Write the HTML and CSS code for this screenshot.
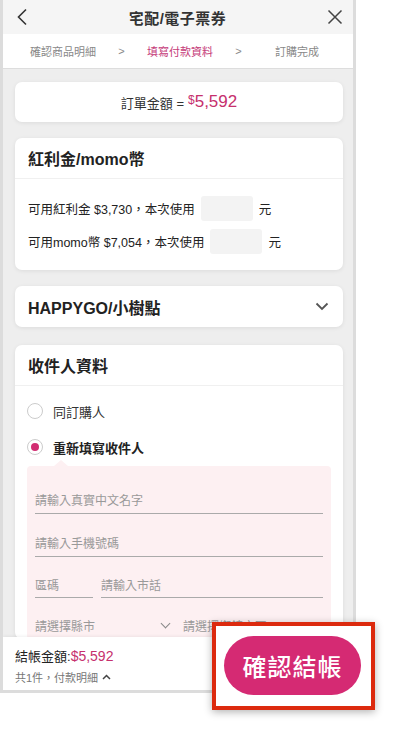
FILE: index.html
```html
<!DOCTYPE html>
<html>

<head>
    <meta charset="UTF-8">
    <title>宅配/電子票券</title>
    <link rel="stylesheet" href="styles.css">
</head>

<body>
    <div class="phone">
        <div class="header">
            <svg class="icon_back" width="12" height="18" viewBox="0 0 12 18"><path d="M10 1.5 L2.5 9 L10 16.5" fill="none" stroke="#333" stroke-width="1.6"/></svg>
            <div class="title">宅配/電子票券</div>
            <svg class="icon_close" width="16" height="16" viewBox="0 0 16 16"><path d="M1.5 1.5 L14.5 14.5 M14.5 1.5 L1.5 14.5" fill="none" stroke="#444" stroke-width="1.5"/></svg>
        </div>
        <div class="steps">
            <span class="step">確認商品明細</span>
            <span class="arrow">&gt;</span>
            <span class="step on">填寫付款資料</span>
            <span class="arrow">&gt;</span>
            <span class="step last">訂購完成</span>
        </div>

        <div class="content">
            <div class="card total">
                訂單金額 = <span class="price"><small>$</small>5,592</span>
            </div>

            <div class="card">
                <div class="card_head">紅利金/momo幣</div>
                <div class="card_body bonus">
                    <div class="row">可用紅利金 $3,730，本次使用 <span class="box"></span> 元</div>
                    <div class="row">可用momo幣 $7,054，本次使用 <span class="box"></span> 元</div>
                </div>
            </div>

            <div class="card fold">
                <div class="card_head">HAPPYGO/小樹點</div>
                <svg width="14" height="9" viewBox="0 0 14 9"><path d="M1.5 1.5 L7 7 L12.5 1.5" fill="none" stroke="#555" stroke-width="1.8"/></svg>
            </div>

            <div class="card receiver_card">
                <div class="card_head">收件人資料</div>
                <div class="card_body receiver">
                    <div class="radio"><span class="dot"></span>同訂購人</div>
                    <div class="radio checked"><span class="dot"></span>重新填寫收件人</div>
                    <div class="form">
                        <div class="field">請輸入真實中文名字</div>
                        <div class="field">請輸入手機號碼</div>
                        <div class="field_row">
                            <div class="field short">區碼</div>
                            <div class="field">請輸入市話</div>
                        </div>
                        <div class="field_row">
                            <div class="field select">請選擇縣市 <i></i></div>
                            <div class="field select">請選擇鄉鎮市區 <i></i></div>
                        </div>
                    </div>
                </div>
            </div>
        </div>

        <div class="bottom">
            <div class="sum">結帳金額:<span>$5,592</span></div>
            <div class="detail">共1件，付款明細
                <svg width="9" height="6" viewBox="0 0 9 6"><path d="M1 5 L4.5 1.5 L8 5" fill="none" stroke="#444" stroke-width="1.5"/></svg>
            </div>
        </div>
    </div>

    <div class="highlight">
        <div class="btn_pay">確認結帳</div>
    </div>
</body>

</html>
```

FILE: styles.css
```css
* {
    box-sizing: border-box;
}

body {
    margin: 0;
    background: #fff;
    font-family: "Liberation Sans", "Noto Sans CJK TC", sans-serif;
    color: #222;
}

.phone {
    width: 356px;
    height: 693px;
    border: 3px solid #dcdcdc;
    border-top: none;
    display: flex;
    flex-direction: column;
    overflow: hidden;
    background: #eee;
}

.header {
    height: 34px;
    flex-shrink: 0;
    background: #f5f5f5;
    display: flex;
    align-items: center;
    justify-content: space-between;
    padding: 0 10px 0 13px;
}

.header .title {
    font-size: 15px;
    font-weight: 700;
    color: #333;
    letter-spacing: 0.5px;
}

.steps {
    height: 35px;
    flex-shrink: 0;
    background: #fff;
    border-bottom: 1px solid #ddd;
    display: flex;
    align-items: center;
    padding-left: 27px;
    font-size: 11px;
    color: #888;
}

.steps .step.on {
    color: #c53a78;
}

.steps .arrow {
    width: 51px;
    text-align: center;
    font-size: 11px;
}

.steps .step.last {
    margin-left: 11px;
}

.content {
    flex: 1;
    overflow: hidden;
    padding: 13px 10px 0 12px;
    display: flex;
    flex-direction: column;
    gap: 16px;
}

.card {
    background: #fff;
    border-radius: 7px;
    box-shadow: 0 1px 4px rgba(0, 0, 0, 0.08);
    flex-shrink: 0;
}

.receiver_card {
    margin-top: 2px;
}

.total {
    height: 40px;
    display: flex;
    align-items: center;
    justify-content: center;
    gap: 4px;
    font-size: 13px;
    color: #333;
}

.total .price {
    color: #c6306d;
    font-size: 17px;
}

.total .price small {
    font-size: 12px;
    position: relative;
    top: -3px;
}

.card_head {
    height: 41px;
    padding-left: 13px;
    display: flex;
    align-items: center;
    font-size: 16px;
    font-weight: 700;
    border-bottom: 1px solid #f0f0f0;
}

.card_body {
    padding: 17px 13px 16px;
}

.bonus {
    display: flex;
    flex-direction: column;
    gap: 8px;
    font-size: 12.5px;
}

.bonus .row {
    display: flex;
    align-items: center;
    gap: 4px;
    white-space: nowrap;
}

.bonus .box {
    width: 52px;
    height: 25px;
    background: #f3f3f3;
    border-radius: 3px;
    margin: 0 2px 0 2px;
}

.fold {
    height: 41px;
    display: flex;
    align-items: center;
    justify-content: space-between;
    padding-right: 14px;
}

.fold .card_head {
    border-bottom: none;
}

.receiver {
    padding: 7px 12px 0 12px;
}

.radio {
    height: 36px;
    display: flex;
    align-items: center;
    gap: 10px;
    font-size: 13px;
    color: #333;
}

.radio .dot {
    width: 16px;
    height: 16px;
    border: 1px solid #ccc;
    border-radius: 50%;
    display: flex;
    align-items: center;
    justify-content: center;
}

.radio.checked {
    font-weight: 700;
    color: #222;
}

.radio.checked .dot::after {
    content: "";
    width: 8px;
    height: 8px;
    border-radius: 50%;
    background: #d22d72;
}

.form {
    margin-top: 1px;
    background: #fdf0f2;
    border-radius: 4px;
    padding: 5px 8px 0;
    position: relative;
}

.form::before {
    content: "";
    position: absolute;
    top: -6px;
    left: 27px;
    border-left: 7px solid transparent;
    border-right: 7px solid transparent;
    border-bottom: 6px solid #fdf0f2;
}

.field {
    flex: 1;
    height: 43px;
    display: flex;
    align-items: center;
    padding-top: 14px;
    border-bottom: 1px solid #aaa;
    font-size: 12px;
    color: #999;
}

.field_row {
    display: flex;
    gap: 8px;
}

.field_row .field {
    height: 41px;
}

.field.short {
    flex: 0 0 58px;
}

.field.select {
    border-bottom: none;
    justify-content: space-between;
    padding-right: 6px;
}

.field.select i {
    width: 7px;
    height: 7px;
    border-right: 1.3px solid #888;
    border-bottom: 1.3px solid #888;
    transform: rotate(45deg);
    margin-top: -4px;
}

.bottom {
    height: 53px;
    flex-shrink: 0;
    background: #fff;
    padding: 9px 12px 0;
    position: relative;
    box-shadow: 0 -1px 3px rgba(0, 0, 0, 0.06);
}

.bottom .sum {
    font-size: 13px;
    color: #222;
}

.bottom .sum span {
    color: #c6306d;
    font-size: 14px;
}

.bottom .detail {
    font-size: 11px;
    color: #777;
    margin-top: 4px;
    display: flex;
    align-items: center;
    gap: 4px;
}

/* 红框提示 */
.highlight {
    position: absolute;
    left: 212px;
    top: 622px;
    width: 163px;
    height: 88px;
    border: 4px solid #dc2a0e;
    background: #fff;
    box-shadow: 0 2px 8px rgba(0, 0, 0, 0.3);
    padding: 10px 0 0 8px;
}

.btn_pay {
    width: 137px;
    height: 59px;
    border-radius: 30px;
    background: #d52a73;
    color: #fff;
    font-size: 24px;
    font-weight: 500;
    display: flex;
    align-items: center;
    justify-content: center;
    letter-spacing: 1px;
}
```
